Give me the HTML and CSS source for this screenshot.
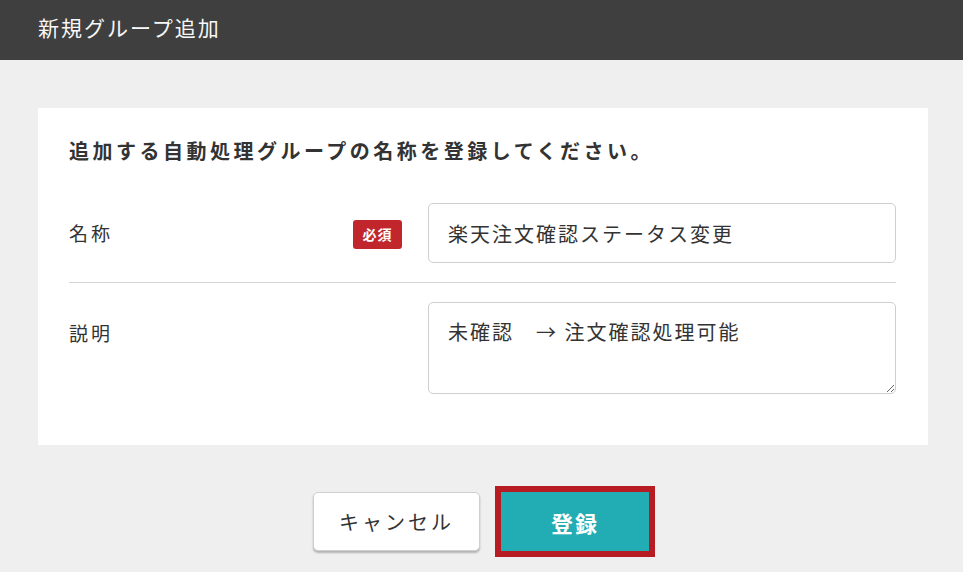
FILE: index.html
```html
<!DOCTYPE html>
<html lang="ja">
<head>
    <meta charset="UTF-8">
    <title>新規グループ追加</title>
    <link rel="stylesheet" href="styles.css">
</head>
<body>
<div class="modal">
    <div class="modal-head">新規グループ追加</div>
    <div class="modal-body">
        <div class="panel">
            <p class="lead">追加する自動処理グループの名称を登録してください。</p>
            <div class="form-row row-center">
                <div class="label">
                    <span>名称</span>
                    <span class="required">必須</span>
                </div>
                <input class="field" type="text" value="楽天注文確認ステータス変更">
            </div>
            <div class="form-row">
                <div class="label label-top">
                    <span>説明</span>
                </div>
                <textarea class="field area">未確認　→ 注文確認処理可能</textarea>
            </div>
        </div>
        <div class="actions">
            <button class="btn btn-cancel">キャンセル</button>
            <button class="btn btn-submit">登録</button>
        </div>
    </div>
</div>
</body>
</html>
```

FILE: styles.css
```css
*{
    margin:0;
    padding:0;
    box-sizing:border-box;
}
body{
    background:#efefef;
    font-family:"Noto Sans CJK JP","Noto Sans",sans-serif;
    color:#333333;
}
.modal-head{
    height:60px;
    background:#3f3f3f;
    color:#f7f7f7;
    font-size:21px;
    letter-spacing:2px;
    line-height:55px;
    padding-left:38px;
}
.modal-body{
    padding:48px 35px 0 38px;
}
.panel{
    background:#ffffff;
    padding:30px 32px 31px 31px;
}
.lead{
    font-size:20px;
    font-weight:bold;
    letter-spacing:3.5px;
    line-height:26px;
    margin-bottom:19px;
}
.form-row{
    display:flex;
    align-items:flex-start;
    gap:26px;
    padding:20px 0 19px;
}
.form-row + .form-row{
    border-top:1px solid #d4d4d4;
    padding:19px 0 20px;
}
.row-center{
    align-items:center;
}
.label{
    width:333px;
    display:flex;
    align-items:center;
    justify-content:space-between;
    font-size:19px;
    letter-spacing:3px;
    line-height:30px;
}
.label-top{
    padding-top:16px;
}
.required{
    background:#c1262c;
    color:#ffffff;
    font-size:14px;
    font-weight:bold;
    letter-spacing:1px;
    line-height:29px;
    width:49px;
    text-align:center;
    border-radius:3px;
    margin-top:2px;
}
.field{
    flex:1;
    height:60px;
    border:1px solid #cfcfcf;
    border-radius:5px;
    padding:0 19px;
    font-family:inherit;
    font-size:20px;
    letter-spacing:2px;
    color:#333333;
    background:#ffffff;
}
.area{
    height:92px;
    padding:14px 19px;
    line-height:30px;
}
.actions{
    display:flex;
    justify-content:center;
    align-items:center;
    gap:15px;
    padding-top:41px;
    padding-left:2px;
}
.btn{
    font-family:inherit;
    font-size:20px;
    letter-spacing:3px;
    cursor:pointer;
}
.btn-cancel{
    width:167px;
    height:59px;
    background:#ffffff;
    color:#333333;
    border:1px solid #cfcfcf;
    border-radius:5px;
    box-shadow:0 2px 2px rgba(0,0,0,0.25);
}
.btn-submit{
    width:160px;
    height:71px;
    background:#22acb3;
    color:#ffffff;
    font-size:22px;
    font-weight:bold;
    letter-spacing:2px;
    border:6px solid #b71c22;
}
```
